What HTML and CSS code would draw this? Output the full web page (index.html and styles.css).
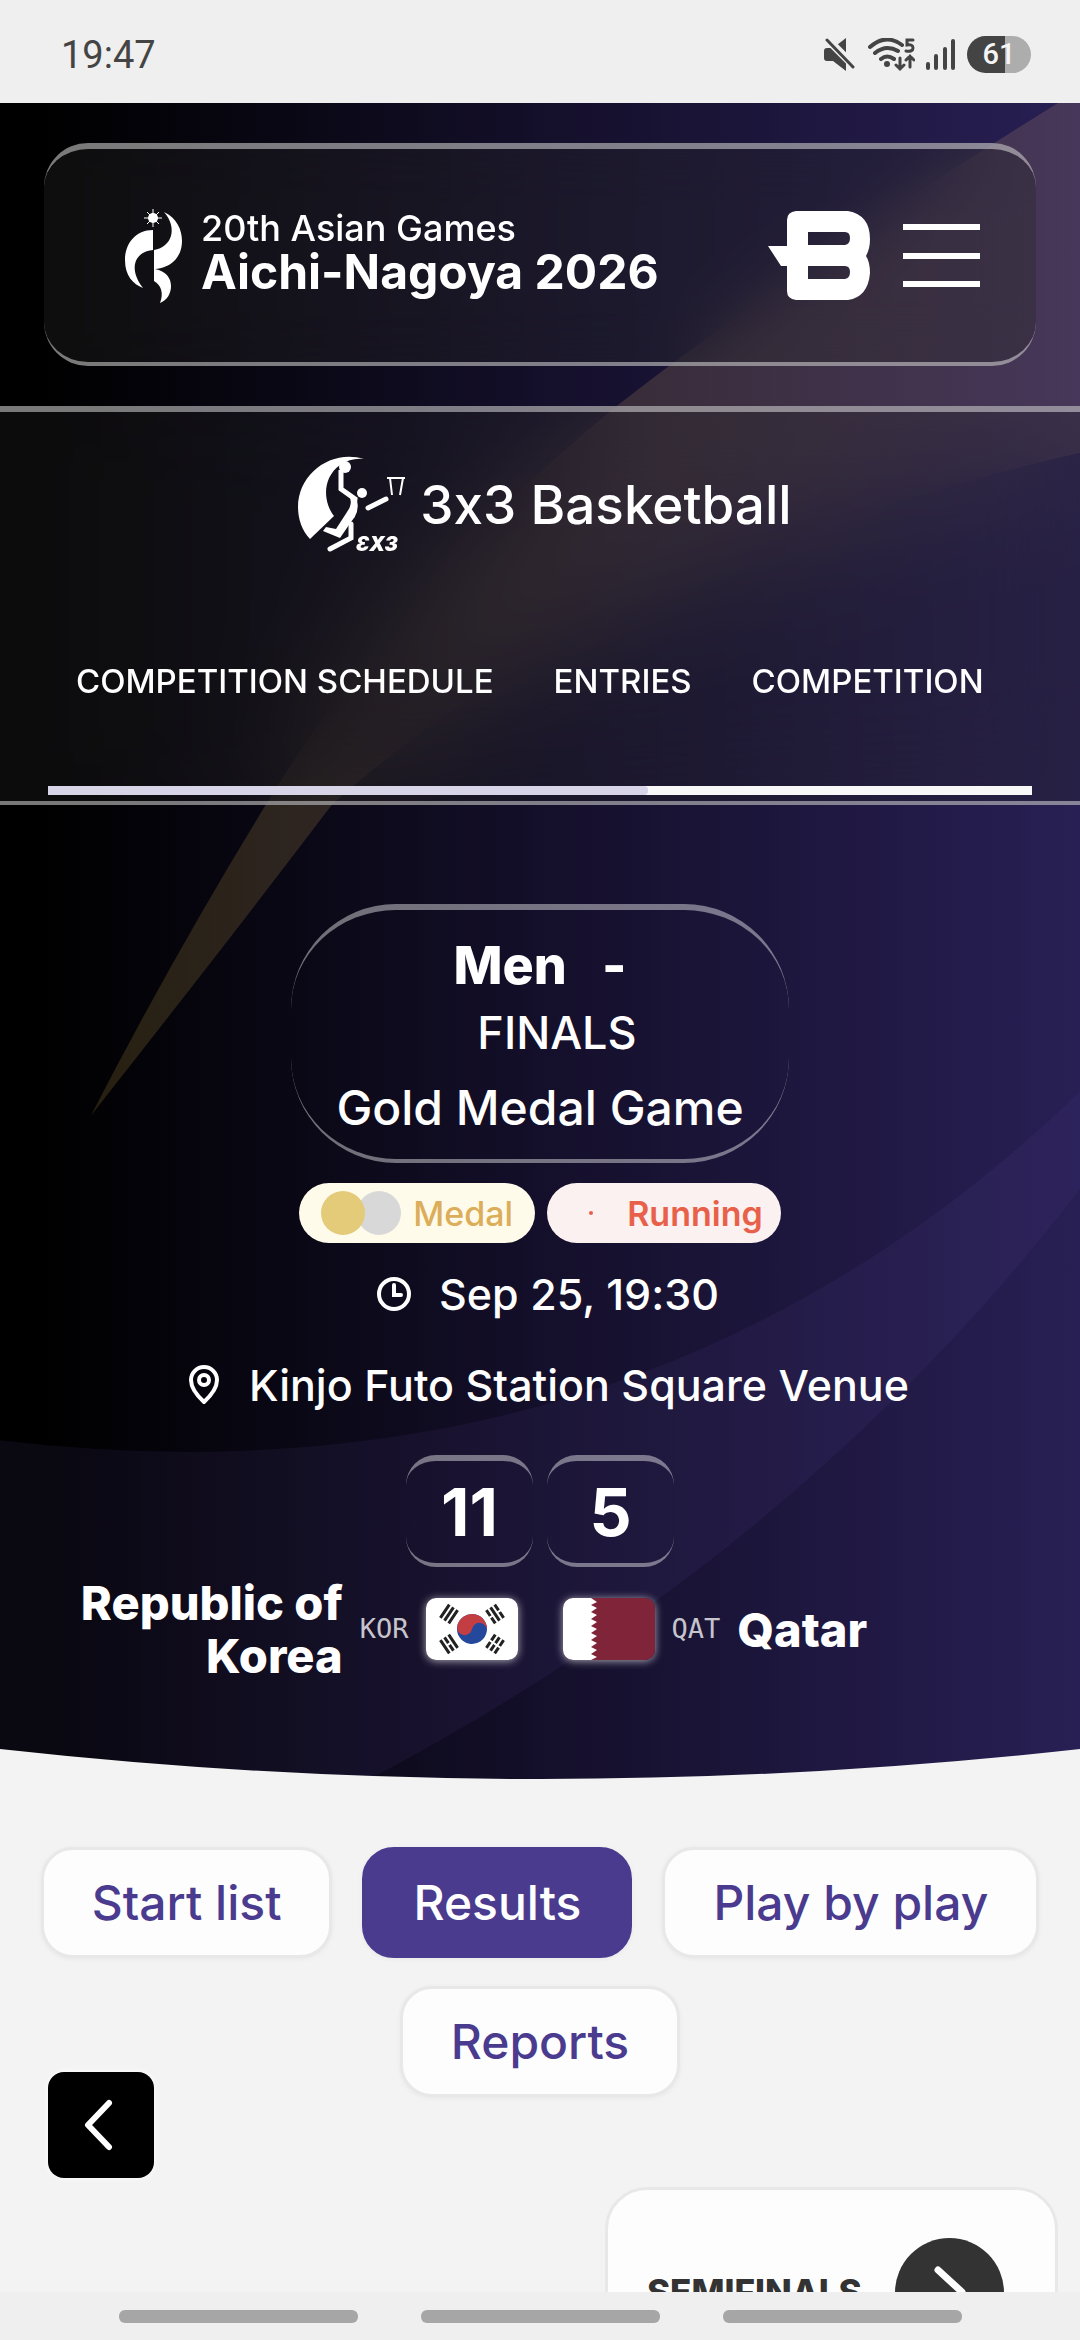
FILE: index.html
```html
<!DOCTYPE html>
<html lang="en">
<head>
<meta charset="utf-8">
<meta name="viewport" content="width=device-width, initial-scale=1">
<title>3x3 Basketball - Gold Medal Game</title>
<link rel="stylesheet" href="styles.css">
</head>
<body>
<div class="screen">
  <div class="status-bar">
    <span class="clock">19:47</span>
    <div class="status-icons">
      <svg width="34" height="34" viewBox="0 0 34 34" fill="#444">
        <path d="M2 10h8L23 0v33L10 23H4q-3 0-3-3v-7q0-3 3-3z"/>
        <path d="M4 1l28 28" stroke="#efefef" stroke-width="8"/>
        <path d="M4 2l26 27" stroke="#444" stroke-width="3" stroke-linecap="round"/>
      </svg>
      <svg width="47" height="34" viewBox="0 0 47 34" fill="none" stroke="#444" stroke-width="4" stroke-linecap="round">
        <path d="M2 9q16-14 32-2M7 15q11-9 23-2M13 21q6-5 13 0"/>
        <circle cx="19" cy="26" r="3" fill="#444" stroke="none"/>
        <path d="M32 20v11m-4-4l4 4 4-4M42 29V18m-4 4l4-4 4 4" stroke-width="3"/>
        <path d="M45 2h-6v5q6-1 6 3t-7 3" stroke-width="3"/>
      </svg>
      <svg width="30" height="34" viewBox="0 0 30 34" stroke="#444" stroke-width="4" stroke-linecap="round">
        <path d="M2 26v4M10 18v12M19 11v19M27 3v27"/>
      </svg>
      <span class="battery">61</span>
    </div>
  </div>

  <main class="page">
    <section class="hero">
      <svg class="hero-art" viewBox="0 0 1080 1677" preserveAspectRatio="none" aria-hidden="true">
        <defs>
          <linearGradient id="night" x1="0" x2="1" y1="0" y2="0">
            <stop offset="0" stop-color="#000"/>
            <stop offset=".04" stop-color="#000"/>
            <stop offset=".5" stop-color="#140f2a"/>
            <stop offset="1" stop-color="#281f54"/>
          </linearGradient>
          <linearGradient id="flare" x1="0" x2="1" y1="0" y2="0">
            <stop offset="0" stop-color="#e6be50"/>
            <stop offset="1" stop-color="#e6b478"/>
          </linearGradient>
        </defs>
        <path fill="url(#night)" d="M0 0H1080V1677H0z"/>
        <path fill="url(#flare)" fill-opacity=".16" d="M1058 0Q800 160 617 303Q400 480 266 702Q175 850 91 1013Q235 830 332 702Q600 460 1080 350V0z"/>
        <path fill="#6450aa" fill-opacity=".1" d="M0 1338Q640 1414 1080 989V1087Q800 1450 370 1677H0z"/>
        <path fill="#f3f3f3" d="M0 1647Q540 1707 1080 1647V1677H0z"/>
      </svg>

      <header class="site-header">
        <div class="header-card">
          <a class="brand" href="#">
            <svg width="60" height="96" viewBox="0 0 60 96" fill="#fff">
              <path d="M29 22C12 22 1 35 1 52c0 16 8 24 18 28C11 70 10 61 11 56c2-9 9-13 18-14z"/>
              <path d="M40 4C53 10 58 22 58 33 58 50 46 60 31 61c11 2 16 9 16 17 0 8-4 14-11 17 4-10 1-18-6-22V42c18-3 24-22 10-38z"/>
              <circle cx="29" cy="10" r="5"/>
              <path d="M29 1v18M20 10h18M23 4l12 12M35 4L23 16" stroke="#fff" stroke-width="1"/>
            </svg>
            <span class="brand-text"><span class="brand-small">20th Asian Games</span><span class="brand-large">Aichi-Nagoya 2026</span></span>
          </a>
          <svg class="b-logo" width="102" height="90" viewBox="0 0 102 90">
            <path fill="#fff" fill-rule="evenodd" d="M28 0H80Q102 4 102 28Q102 38 98 45Q102 51 102 62Q100 86 80 89H28Q19 88 19 80V55H13L0 35H19V9Q19 1 28 0zM40 21V34H77Q82 33 82 27T77 21zM40 55V68H77Q82 67 82 61T77 55z"/>
          </svg>
          <button class="menu" type="button" aria-label="Menu"><span></span><span></span><span></span></button>
        </div>
      </header>

      <div class="sport">
        <div class="sport-title">
          <svg width="108" height="98" viewBox="0 0 108 98" fill="#fff">
            <path d="M66 3C34-7 0 17 0 51c0 12 4 24 12 32L36 60C25 46 24 22 42 9c8-5 15-7 24-6z"/>
            <circle cx="47" cy="11" r="6"/>
            <circle cx="64" cy="37" r="5"/>
            <path d="M43 14v19l14 10-3 18" fill="none" stroke="#fff" stroke-width="5"/>
            <path d="M48 36l11 8q3 12-6 22l-11 16-17-7 3-4 10 2 11-17q8-11-1-20z"/>
            <path d="M53 68v14L32 93" fill="none" stroke="#fff" stroke-width="5" stroke-linecap="round"/>
            <path d="M70 52l18-9" fill="none" stroke="#fff" stroke-width="5" stroke-linecap="round"/>
            <path d="M89 22h18M92 22l2 17M105 22l-3 17" fill="none" stroke="#fff" stroke-width="2"/>
            <text class="mark" x="58" y="95">ƐX3</text>
          </svg>
          <span>3x3 Basketball</span>
        </div>
        <nav class="sport-nav">
          <a href="#">COMPETITION SCHEDULE</a>
          <a href="#">ENTRIES</a>
          <a href="#">COMPETITION</a>
        </nav>
        <div class="scroll-track"><div class="scroll-thumb"></div></div>
      </div>

      <div class="match">
        <h1 class="event">
          <span class="gender"><span>Men</span><span>-</span></span>
          <span class="phase">FINALS</span>
          <span class="unit">Gold Medal Game</span>
        </h1>
        <div class="badges">
          <span class="badge medal"><i class="coin gold"></i><i class="coin silver"></i>Medal</span>
          <span class="badge running"><i class="dot"></i>Running</span>
        </div>
        <div class="info date">
          <svg width="34" height="34" viewBox="0 0 34 34" fill="none" stroke="#fff" stroke-width="4" stroke-linecap="round"><circle cx="17" cy="17" r="15"/><path d="M17 8v10h7"/></svg>
          Sep 25, 19:30
        </div>
        <div class="info venue">
          <svg width="34" height="40" viewBox="0 0 34 40" fill="none" stroke="#fff" stroke-width="4" stroke-linejoin="round"><path d="M17 37Q4 25 4 15a13 13 0 0 1 26 0q0 10-13 22z"/><circle cx="17" cy="15" r="5"/></svg>
          Kinjo Futo Station Square Venue
        </div>
        <div class="scores"><span class="score">11</span><span class="score">5</span></div>
        <div class="teams">
          <div class="team home">
            <span class="team-name">Republic of Korea</span>
            <span class="code">KOR</span>
            <svg class="flag" viewBox="0 0 92 62">
              <path fill="#fff" d="M0 0h92v62H0z"/>
              <g transform="rotate(10 46 31)">
                <circle cx="46" cy="31" r="15" fill="#23489c"/>
                <path fill="#c23e43" d="M31 31a15 15 0 0 1 30 0a7.5 7.5 0 0 0-15 0a7.5 7.5 0 0 1-15 0z"/>
              </g>
              <g stroke="#222" stroke-width="3">
                <g transform="translate(23 16) rotate(-56)"><path d="M-8-5H8M-8 0H8M-8 5H8"/></g>
                <g transform="translate(69 16) rotate(56)"><path d="M-8-5h7M1-5h7M-8 0H8M-8 5h7M1 5h7"/></g>
                <g transform="translate(23 46) rotate(56)"><path d="M-8-5H8M-8 0h7M1 0h7M-8 5H8"/></g>
                <g transform="translate(69 46) rotate(-56)"><path d="M-8-5h7M1-5h7M-8 0h7M1 0h7M-8 5h7M1 5h7"/></g>
              </g>
            </svg>
          </div>
          <div class="team away">
            <svg class="flag" viewBox="0 0 92 62">
              <path fill="#80243a" d="M0 0h92v62H0z"/>
              <path fill="#fff" d="M0 0h28l6 4-6 3 6 3-6 4 6 3-6 4 6 3-6 4 6 3-6 4 6 3-6 4 6 3-6 4 6 3-6 4 6 3-6 3H0z"/>
            </svg>
            <span class="code">QAT</span>
            <span class="team-name">Qatar</span>
          </div>
        </div>
      </div>
    </section>

    <div class="tabs">
      <button class="tab" type="button">Start list</button>
      <button class="tab active" type="button">Results</button>
      <button class="tab" type="button">Play by play</button>
      <button class="tab" type="button">Reports</button>
    </div>

    <section class="bracket">
      <span>SEMIFINALS</span>
      <button class="next" type="button" aria-label="Next phase">
        <svg width="34" height="54" viewBox="0 0 34 54" fill="none" stroke="#fff" stroke-width="7" stroke-linecap="round" stroke-linejoin="round"><path d="M5 5l24 22L5 49"/></svg>
      </button>
    </section>

    <button class="back" type="button" aria-label="Back">
      <svg width="34" height="52" viewBox="0 0 34 52" fill="none" stroke="#fff" stroke-width="6" stroke-linecap="round" stroke-linejoin="round"><path d="M25 4L4 26l21 22"/></svg>
    </button>
  </main>

  <div class="gesture-bar"><i></i><i></i><i></i></div>
</div>
</body>
</html>
```
FILE: styles.css
```css
* { box-sizing: border-box; }
body { margin: 0; background: #f3f3f3; color: #fff; font-family: Inter, sans-serif; font-weight: 500; font-feature-settings: "calt" 0; }
button { font: inherit; border: 0; padding: 0; }
a { color: inherit; text-decoration: none; }
svg { display: block; flex: none; }

.screen { display: flex; flex-direction: column; height: 100vh; }

/* system bars */
.status-bar { flex: none; display: flex; align-items: center; justify-content: space-between; height: 103px; padding: 6px 49px 0 61px; background: #efefef; color: #444; }
.clock { font: 400 38px/44px Roboto, sans-serif; }
.status-icons { display: flex; align-items: center; gap: 11px; }
.battery { width: 64px; height: 37px; border-radius: 19px; background: linear-gradient(90deg, #444 60%, #adadad 60%); color: #f5f5f5; font: 500 29px/37px Roboto, sans-serif; text-align: center; }
.gesture-bar { flex: none; display: flex; justify-content: center; gap: 63px; height: 48px; padding-top: 18px; background: #efefef; }
.gesture-bar i { width: 239px; height: 13px; border-radius: 6px; background: #a6a6a6; }

.page { position: relative; flex: 1; min-height: 0; overflow: hidden; }

/* hero */
.hero { position: relative; }
.hero-art { position: absolute; inset: 0; width: 100%; height: 100%; }
.site-header { position: relative; padding: 40px 44px; }
.header-card { display: flex; align-items: center; height: 223px; padding: 0 56px 0 80px; border: solid rgba(255,255,255,.45); border-width: 6px 0 4px; border-radius: 44px; background: rgba(40,40,40,.35); backdrop-filter: blur(30px); }
.brand { display: flex; align-items: center; gap: 17px; }
.brand-text { display: flex; flex-direction: column; padding-bottom: 10px; }
.brand-small { font-size: 36px; line-height: 42px; }
.brand-large { font-size: 48px; line-height: 46px; font-weight: 700; }
.b-logo { margin-left: auto; }
.menu { display: flex; flex-direction: column; justify-content: space-between; width: 77px; height: 63px; margin-left: 33px; background: none; }
.menu span { height: 6px; background: #fff; }

.sport { position: relative; padding: 44px 48px 6px; border: solid rgba(255,255,255,.45); border-width: 6px 0 4px; background: rgba(40,40,40,.3); backdrop-filter: blur(60px); }
.sport-title { display: flex; align-items: center; justify-content: center; gap: 14px; padding-left: 10px; font-size: 53px; line-height: 60px; }
.mark { font: italic 900 20px Inter, sans-serif; }
.sport-nav { display: flex; gap: 60px; margin-top: 107px; padding: 0 28px; overflow: hidden; white-space: nowrap; font-size: 33px; line-height: 40px; }
.scroll-track { height: 9px; margin-top: 85px; background: #f8f8f8; }
.scroll-thumb { width: 61%; height: 100%; border-radius: 0 4px 4px 0; background: #d9d5e9; }

/* match summary */
.match { position: relative; display: flex; flex-direction: column; align-items: center; padding: 99px 44px 97px; }
.event { display: flex; flex-direction: column; align-items: center; margin: 0; padding: 24px 45px 11px; border: solid rgba(255,255,255,.42); border-width: 6px 0 4px; border-radius: 105px; font-weight: 500; }
.gender { display: flex; gap: 35px; font-size: 52px; line-height: 64px; font-weight: 800; }
.phase { padding-left: 34px; font-size: 45px; line-height: 70px; }
.unit { font-size: 48px; line-height: 80px; }
.badges { display: flex; gap: 12px; margin-top: 20px; }
.badge { display: flex; align-items: center; height: 60px; border-radius: 30px; font-size: 34px; }
.medal { padding: 0 22px; background: #fffbeb; color: #dcae5a; }
.running { padding: 0 18px 0 42px; background: #fbf1f1; color: #e9604a; font-weight: 600; }
.coin { width: 44px; height: 44px; border-radius: 50%; }
.gold { position: relative; z-index: 1; background: #e4cb7a; }
.silver { margin: 0 12px 0 -8px; background: #d8d8d8; }
.dot { width: 4px; height: 4px; margin-right: 34px; border-radius: 50%; background: #e9604a; }
.info { display: flex; align-items: center; gap: 28px; padding-left: 16px; font-size: 43px; line-height: 48px; }
.date { margin-top: 27px; }
.venue { margin-top: 43px; }
.scores { display: flex; gap: 14px; margin-top: 46px; }
.score { width: 127px; height: 112px; border: solid rgba(255,255,255,.42); border-width: 6px 0 4px; border-radius: 30px; font-size: 66px; line-height: 102px; font-weight: 700; text-align: center; }
.teams { display: grid; grid-template-columns: 1fr 1fr; gap: 45px; width: 100%; margin-top: 9px; }
.team { display: flex; align-items: center; gap: 17px; min-width: 0; }
.home { justify-content: flex-end; text-align: right; }
.team-name { font-size: 47px; line-height: 53px; font-weight: 800; }
.code { color: #c6c4cc; font: 400 27px/32px "DejaVu Sans Mono", monospace; }
.flag { width: 92px; height: 62px; border-radius: 10px; box-shadow: 0 1px 8px rgba(255,255,255,.65); }

/* tabs */
.tabs { display: flex; flex-wrap: wrap; justify-content: center; gap: 28px 30px; padding: 68px 40px 0; }
.tab { height: 111px; padding: 0 48px; border: 3px solid #e8e8e8; border-radius: 32px; background: #fdfdfd; color: #4a3b8f; font-size: 48px; box-shadow: 0 1px 5px rgba(0,0,0,.05); }
.tab.active { border-color: #4a3b8f; background: #4a3b8f; color: #fff; }

.bracket { display: flex; align-items: center; justify-content: space-between; width: 453px; height: 210px; margin: 90px 22px 0 auto; padding: 0 51px 0 39px; border: 3px solid #e8e8e8; border-radius: 42px; background: #fdfdfd; color: #333; font-size: 35px; font-weight: 800; }
.next, .back { display: flex; align-items: center; justify-content: center; }
.next { width: 109px; height: 109px; border-radius: 50%; background: #333; }
.back { position: absolute; left: 48px; bottom: 114px; width: 106px; height: 106px; border-radius: 16px; background: #000; box-shadow: 0 0 6px #fff; }
```
